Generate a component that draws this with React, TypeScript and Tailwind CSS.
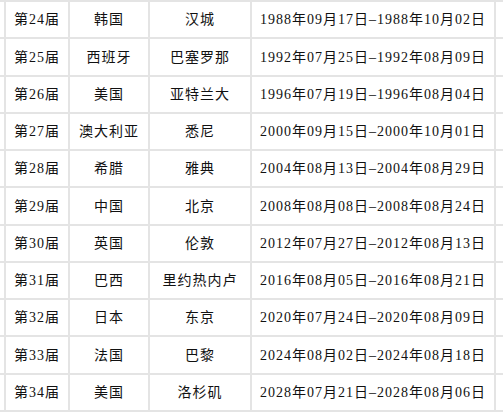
const rows = [
  { no: '第24届', country: '韩国', city: '汉城', date: '1988年09月17日–1988年10月02日' },
  { no: '第25届', country: '西班牙', city: '巴塞罗那', date: '1992年07月25日–1992年08月09日' },
  { no: '第26届', country: '美国', city: '亚特兰大', date: '1996年07月19日–1996年08月04日' },
  { no: '第27届', country: '澳大利亚', city: '悉尼', date: '2000年09月15日–2000年10月01日' },
  { no: '第28届', country: '希腊', city: '雅典', date: '2004年08月13日–2004年08月29日' },
  { no: '第29届', country: '中国', city: '北京', date: '2008年08月08日–2008年08月24日' },
  { no: '第30届', country: '英国', city: '伦敦', date: '2012年07月27日–2012年08月13日' },
  { no: '第31届', country: '巴西', city: '里约热内卢', date: '2016年08月05日–2016年08月21日' },
  { no: '第32届', country: '日本', city: '东京', date: '2020年07月24日–2020年08月09日' },
  { no: '第33届', country: '法国', city: '巴黎', date: '2024年08月02日–2024年08月18日' },
  { no: '第34届', country: '美国', city: '洛杉矶', date: '2028年07月21日–2028年08月06日' },
];

const cell = 'flex items-center justify-center border-r-2 border-b-2 border-[#e4e4e4] whitespace-nowrap';

const App = () => {
  return (
    <div
      className="w-[503px] h-[414px] overflow-hidden bg-white text-[14px] tracking-[1px] text-[#111]"
      style={{ fontFamily: '"Liberation Serif", "Noto Sans CJK SC", serif' }}
    >
      <div className="w-[520px] border-t-2 border-[#e4e4e4]">
        {rows.map((r, i) => (
          <div
            key={r.no}
            className={`grid grid-cols-[6px_64px_80px_102px_244px_1fr] ${i % 4 === 1 ? 'h-[38px]' : 'h-[37px]'}`}
          >
            <div className={cell}></div>
            <div className={cell}>{r.no}</div>
            <div className={cell}>{r.country}</div>
            <div className={cell}>{r.city}</div>
            <div className={cell}>{r.date}</div>
            <div className={cell}></div>
          </div>
        ))}
      </div>
    </div>
  );
};

export default App;
